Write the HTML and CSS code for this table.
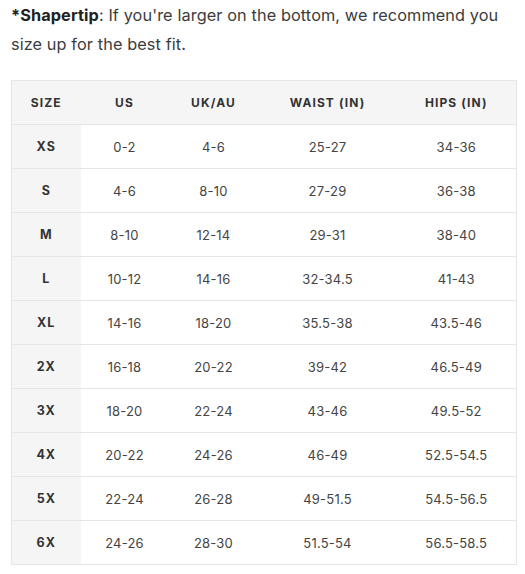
FILE: index.html
```html
<!DOCTYPE html>
<html>
<head>
<meta charset="utf-8">
<link rel="stylesheet" href="styles.css">
</head>
<body>
<div class="page">
  <p class="tip"><strong>*Shapertip</strong>: If you're larger on the bottom, we recommend you size up for the best fit.</p>
  <table class="chart">
    <colgroup>
      <col class="c1"><col class="c2"><col class="c3"><col class="c4"><col class="c5">
    </colgroup>
    <thead>
      <tr><th>Size</th><th>US</th><th>UK/AU</th><th>Waist (in)</th><th>Hips (in)</th></tr>
    </thead>
    <tbody>
      <tr><th>XS</th><td>0-2</td><td>4-6</td><td>25-27</td><td>34-36</td></tr>
      <tr><th>S</th><td>4-6</td><td>8-10</td><td>27-29</td><td>36-38</td></tr>
      <tr><th>M</th><td>8-10</td><td>12-14</td><td>29-31</td><td>38-40</td></tr>
      <tr><th>L</th><td>10-12</td><td>14-16</td><td>32-34.5</td><td>41-43</td></tr>
      <tr><th>XL</th><td>14-16</td><td>18-20</td><td>35.5-38</td><td>43.5-46</td></tr>
      <tr><th>2X</th><td>16-18</td><td>20-22</td><td>39-42</td><td>46.5-49</td></tr>
      <tr><th>3X</th><td>18-20</td><td>22-24</td><td>43-46</td><td>49.5-52</td></tr>
      <tr><th>4X</th><td>20-22</td><td>24-26</td><td>46-49</td><td>52.5-54.5</td></tr>
      <tr><th>5X</th><td>22-24</td><td>26-28</td><td>49-51.5</td><td>54.5-56.5</td></tr>
      <tr><th>6X</th><td>24-26</td><td>28-30</td><td>51.5-54</td><td>56.5-58.5</td></tr>
    </tbody>
  </table>
</div>
</body>
</html>
```
FILE: styles.css
```css
html, body {
  margin: 0;
  padding: 0;
  background: #ffffff;
}
.page {
  padding: 0 10px 0 11px;
  font-family: Inter, "Noto Sans", sans-serif;
  color: #3a3a3a;
}
.tip {
  margin: 0;
  padding-top: 1px;
  font-size: 16.3px;
  letter-spacing: 0.1px;
  line-height: 29px;
  color: #3c3c3c;
}
.tip strong {
  font-weight: 700;
  color: #222;
}
.chart {
  margin-top: 21px;
  width: 505px;
  border-collapse: collapse;
  table-layout: fixed;
  border: 1px solid #e6e6e6;
}
.c1 { width: 69px; }
.c2 { width: 88px; }
.c3 { width: 90px; }
.c4 { width: 138px; }
.c5 { width: 120px; }
.chart th, .chart td {
  height: 43px;
  padding: 0;
  text-align: center;
  vertical-align: middle;
  border-bottom: 1px solid #e6e6e6;
}
.chart thead th {
  background: #f5f5f5;
  font-size: 12px;
  font-weight: 700;
  letter-spacing: 1.1px;
  text-transform: uppercase;
  color: #333;
}
.chart tbody th {
  background: #f5f5f5;
  font-size: 12.5px;
  font-weight: 700;
  letter-spacing: 1px;
  color: #333;
}
.chart td {
  font-size: 13px;
  color: #444;
  letter-spacing: 0.2px;
}
.chart tbody tr:last-child th, .chart tbody tr:last-child td {
  border-bottom: none;
}
```
